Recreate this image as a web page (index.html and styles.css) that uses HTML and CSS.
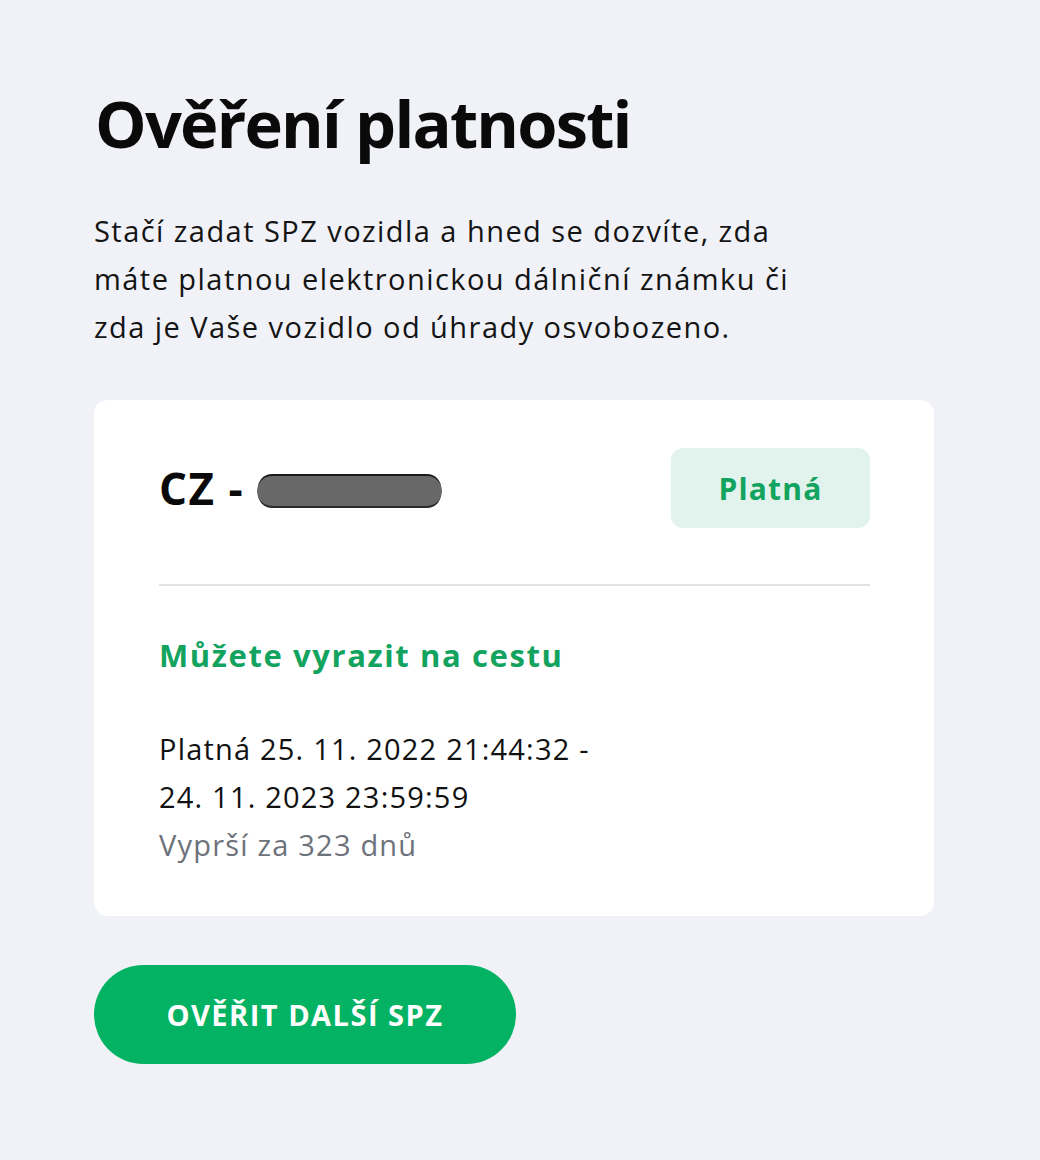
FILE: index.html
```
<!DOCTYPE html>
<html lang="cs">
<head>
<meta charset="utf-8">
<title>Ověření platnosti</title>
<link rel="stylesheet" href="styles.css">
</head>
<body>
<main class="page">
  <h1 class="title">Ověření platnosti</h1>
  <p class="intro">Stačí zadat SPZ vozidla a hned se dozvíte, zda<br>máte platnou elektronickou dálniční známku či<br>zda je Vaše vozidlo od úhrady osvobozeno.</p>
  <section class="card">
    <div class="card-head">
      <div class="plate">CZ - <span class="redact" aria-label="skryto"></span></div>
      <div class="badge">Platná</div>
    </div>
    <hr class="divider">
    <h2 class="status">Můžete vyrazit na cestu</h2>
    <p class="validity">Platná 25. 11. 2022 21:44:32 -<br>24. 11. 2023 23:59:59</p>
    <p class="expires">Vyprší za 323 dnů</p>
  </section>
  <button class="btn" type="button">OVĚŘIT DALŠÍ SPZ</button>
</main>
</body>
</html>
```
FILE: styles.css
```
html, body {
  margin: 0;
  padding: 0;
}
body {
  background: #f0f2f7;
  font-family: "Open Sans", "Noto Sans", sans-serif;
  color: #111;
}
.page {
  padding: 79px 106px 0 94px;
  width: 840px;
}
.title {
  margin: 0;
  font-family: "Open Sans", sans-serif;
  font-weight: 700;
  font-size: 65px;
  line-height: 88px;
  letter-spacing: -1.8px;
  color: #0a0a0a;
  padding-left: 1px;
}
.intro {
  margin: 40px 0 0 0;
  font-size: 29px;
  line-height: 48px;
  letter-spacing: 1.45px;
  color: #141414;
}
.card {
  margin-top: 49px;
  background: #fff;
  border-radius: 14px;
  padding: 48px 64px 47px 65px;
}
.card-head {
  display: flex;
  justify-content: space-between;
  align-items: center;
}
.plate {
  font-size: 44px;
  font-weight: 700;
  letter-spacing: 1.5px;
  color: #0a0a0a;
  display: flex;
  align-items: center;
  white-space: pre;
}
.redact {
  display: inline-block;
  width: 185px;
  height: 30px;
  margin-top: 6px;
  background: #686868;
  border-radius: 15px;
  box-shadow: 0 -3px 0 -1px #1a1a1a, 0 3px 0 -1px #2a2a2a;
}
.badge {
  width: 199px;
  height: 80px;
  border-radius: 12px;
  background: #e2f3ed;
  color: #12a35f;
  font-weight: 700;
  font-size: 30px;
  letter-spacing: 1.2px;
  display: flex;
  align-items: center;
  justify-content: center;
}
.divider {
  margin: 56px 0 0 0;
  border: 0;
  border-top: 2px solid #e2e3e6;
}
.status {
  margin: 41px 0 0 0;
  font-size: 31px;
  line-height: 56px;
  font-weight: 700;
  letter-spacing: 1.6px;
  color: #12a35f;
}
.validity {
  margin: 42px 0 0 0;
  font-size: 29px;
  line-height: 48px;
  letter-spacing: 1.2px;
  color: #111;
}
.expires {
  margin: 0;
  font-size: 29px;
  line-height: 48px;
  letter-spacing: 1.2px;
  color: #6d727b;
}
.btn {
  margin-top: 49px;
  width: 422px;
  height: 99px;
  border: 0;
  border-radius: 50px;
  background: #03b262;
  color: #fff;
  font-family: "Open Sans", sans-serif;
  font-weight: 700;
  font-size: 29px;
  letter-spacing: 1.5px;
  cursor: pointer;
}
```
